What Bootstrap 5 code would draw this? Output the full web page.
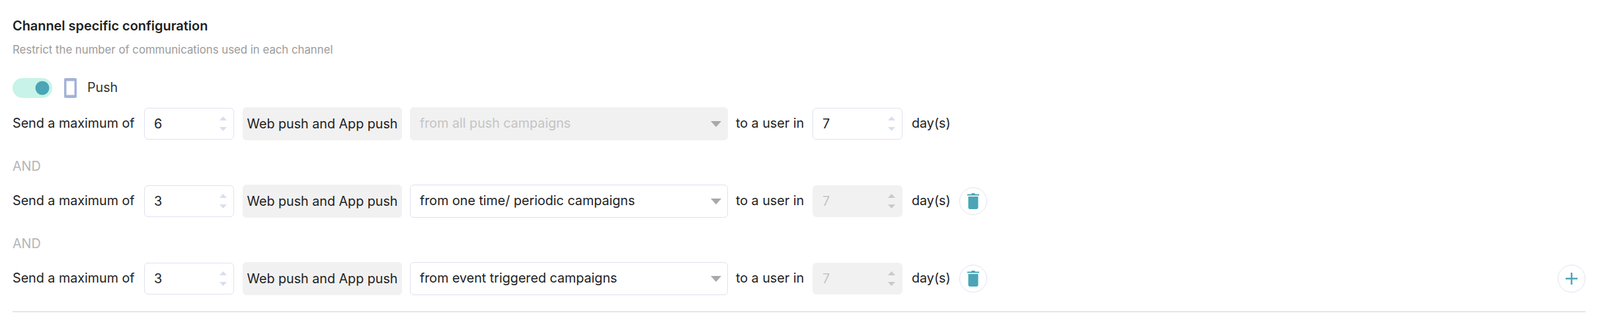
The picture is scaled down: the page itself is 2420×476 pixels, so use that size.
<!DOCTYPE html>
<html lang="en">
<head>
    <meta charset="UTF-8">
    <meta name="viewport" content="width=device-width, initial-scale=1.0">
    <title>Channel specific configuration</title>
    <link rel="stylesheet" href="https://cdn.jsdelivr.net/npm/bootstrap@5.3.0/dist/css/bootstrap.min.css">
    <style>
        body {
            font-family: Inter, "Liberation Sans", sans-serif;
            background: #fff;
            color: #222;
            font-size: 19.7px;
        }
        .page-wrap {
            padding: 26px 22px 0 19px;
        }
        .page-title {
            font-size: 19.9px;
            font-weight: 600;
            line-height: 26px;
            margin: 0 0 11px;
            color: #1f1f1f;
        }
        .page-sub {
            font-size: 16.75px;
            line-height: 24px;
            color: #9b9b9b;
            margin: 0 0 31px;
        }
        .toggle-row {
            height: 30px;
            margin-bottom: 15px;
        }
        .form-switch .toggle-input {
            width: 60px;
            height: 30px;
            margin: 0;
            float: none;
            border: 0;
            border-radius: 15px;
            background-color: #c8f3e8;
            background-image: url("data:image/svg+xml,%3csvg xmlns='http://www.w3.org/2000/svg' viewBox='-4 -4 8 8'%3e%3ccircle r='2.8' fill='%234ba5b7'/%3e%3c/svg%3e");
            background-position: right 2px center;
            background-size: 30px 30px;
        }
        .phone-icon {
            margin-left: 18px;
            margin-right: 16px;
        }
        .push-label {
            color: #333;
        }
        .rule-row {
            height: 48px;
        }
        .rule-text {
            white-space: nowrap;
            line-height: 1;
        }
        .w-send { width: 199px; }
        .w-to { width: 128px; padding-left: 12px; }
        .w-day { width: 86px; padding-left: 14px; }
        .num-wrap {
            position: relative;
            width: 136px;
            height: 48px;
        }
        .num-field.form-control {
            height: 48px;
            font-size: 19.7px;
            color: #222;
            padding: 0 40px 0 14px;
            border: 1px solid #dfe1f0;
            border-radius: 6px;
            box-shadow: none;
        }
        .num-field.form-control:disabled {
            background: #f1f1f1;
            border-color: #f1f1f1;
            color: #c4c4c4;
            opacity: 1;
        }
        .num-field::-webkit-inner-spin-button,
        .num-field::-webkit-outer-spin-button {
            -webkit-appearance: none;
            margin: 0;
        }
        .spin-arrows {
            position: absolute;
            right: 11px;
            top: 13px;
            width: 11px;
            height: 22px;
        }
        .channel-box {
            width: 241px;
            height: 50px;
            margin-left: 13px;
            background: #f1f1f1;
            border-radius: 6px;
            line-height: 50px;
            text-align: center;
            white-space: nowrap;
        }
        .camp-select.form-select {
            width: 481px;
            height: 50px;
            margin-left: 12px;
            font-size: 19.7px;
            color: #222;
            padding: 0 40px 0 14px;
            border: 1px solid #dfe1f0;
            border-radius: 6px;
            background-image: url("data:image/svg+xml,%3csvg xmlns='http://www.w3.org/2000/svg' viewBox='0 0 16 9'%3e%3cpath d='M0 0h16L8 9z' fill='%23a9a9a9'/%3e%3c/svg%3e");
            background-size: 16px 9px;
            background-position: right 9px center;
            box-shadow: none;
        }
        .camp-select.form-select:disabled {
            background-color: #f1f1f1;
            border-color: #f1f1f1;
            color: #c4c4c4;
        }
        .and-label {
            height: 69px;
            line-height: 20px;
            padding-top: 30px;
            color: #b5b5b5;
        }
        .round-btn.btn {
            width: 42px;
            height: 42px;
            padding: 0;
            border: 1px solid #e1e3f2;
            border-radius: 50%;
            background: #fff;
            display: flex;
            align-items: center;
            justify-content: center;
            flex: none;
        }
        .plus-btn { margin-left: auto; }
        .bottom-rule {
            border: 0;
            border-top: 2px solid #e3e4f0;
            opacity: 1;
            margin: 25px 0 0;
        }
    </style>
</head>
<body>
    <svg width="0" height="0" class="d-block position-absolute">
        <symbol id="spin-live" viewBox="0 0 11 22">
            <path d="M5.500 0L11 6H0z" fill="#d8deef"/><path d="M0 16h11l-5.500 6z" fill="#d8deef"/>
        </symbol>
        <symbol id="spin-off" viewBox="0 0 11 22">
            <path d="M5.500 0L11 6H0z" fill="#c9c9c9"/><path d="M0 16h11l-5.500 6z" fill="#c9c9c9"/>
        </symbol>
        <symbol id="trash" viewBox="0 0 18 24">
            <path d="M6 1.500C6 .7 6.700 0 7.500 0h3c.8 0 1.500.7 1.500 1.500H18v2H0v-2z" fill="#4ba5b7"/>
            <path d="M1.500 5h15v16.500c0 1.400-1.100 2.500-2.500 2.500H4c-1.400 0-2.500-1.100-2.500-2.500z" fill="#4ba5b7"/>
        </symbol>
    </svg>

    <div class="page-wrap">
        <h6 class="page-title">Channel specific configuration</h6>
        <p class="page-sub">Restrict the number of communications used in each channel</p>

        <div class="toggle-row d-flex align-items-center">
            <div class="form-check form-switch p-0 m-0 d-flex">
                <input class="form-check-input toggle-input" type="checkbox" role="switch" checked>
            </div>
            <svg class="phone-icon" width="19" height="30" viewBox="0 0 19 30">
                <rect width="19" height="30" rx="2" fill="#a3b3d6"/>
                <rect x="3.500" y="4.500" width="12" height="21" fill="#fff"/>
            </svg>
            <span class="push-label">Push</span>
        </div>

        <div class="rule-row d-flex align-items-center">
            <span class="rule-text w-send">Send a maximum of</span>
            <div class="num-wrap">
                <input class="form-control num-field" type="number" value="6">
                <svg class="spin-arrows"><use href="#spin-live"/></svg>
            </div>
            <div class="channel-box">Web push and App push</div>
            <select class="form-select camp-select" disabled><option>from all push campaigns</option></select>
            <span class="rule-text w-to">to a user in</span>
            <div class="num-wrap">
                <input class="form-control num-field" type="number" value="7">
                <svg class="spin-arrows"><use href="#spin-live"/></svg>
            </div>
            <span class="rule-text w-day">day(s)</span>
        </div>

        <div class="and-label">AND</div>

        <div class="rule-row d-flex align-items-center">
            <span class="rule-text w-send">Send a maximum of</span>
            <div class="num-wrap">
                <input class="form-control num-field" type="number" value="3">
                <svg class="spin-arrows"><use href="#spin-live"/></svg>
            </div>
            <div class="channel-box">Web push and App push</div>
            <select class="form-select camp-select"><option>from one time/ periodic campaigns</option></select>
            <span class="rule-text w-to">to a user in</span>
            <div class="num-wrap">
                <input class="form-control num-field" type="number" value="7" disabled>
                <svg class="spin-arrows"><use href="#spin-off"/></svg>
            </div>
            <span class="rule-text w-day">day(s)</span>
            <button class="btn round-btn" type="button" aria-label="Delete"><svg width="18" height="24"><use href="#trash"/></svg></button>
        </div>

        <div class="and-label">AND</div>

        <div class="rule-row d-flex align-items-center">
            <span class="rule-text w-send">Send a maximum of</span>
            <div class="num-wrap">
                <input class="form-control num-field" type="number" value="3">
                <svg class="spin-arrows"><use href="#spin-live"/></svg>
            </div>
            <div class="channel-box">Web push and App push</div>
            <select class="form-select camp-select"><option>from event triggered campaigns</option></select>
            <span class="rule-text w-to">to a user in</span>
            <div class="num-wrap">
                <input class="form-control num-field" type="number" value="7" disabled>
                <svg class="spin-arrows"><use href="#spin-off"/></svg>
            </div>
            <span class="rule-text w-day">day(s)</span>
            <button class="btn round-btn" type="button" aria-label="Delete"><svg width="18" height="24"><use href="#trash"/></svg></button>
            <button class="btn round-btn plus-btn" type="button" aria-label="Add">
                <svg width="18" height="18" viewBox="0 0 18 18"><path d="M9 0v18M0 9h18" stroke="#4ba5b7" stroke-width="2.500" fill="none"/></svg>
            </button>
        </div>

        <hr class="bottom-rule">
    </div>
</body>
</html>
